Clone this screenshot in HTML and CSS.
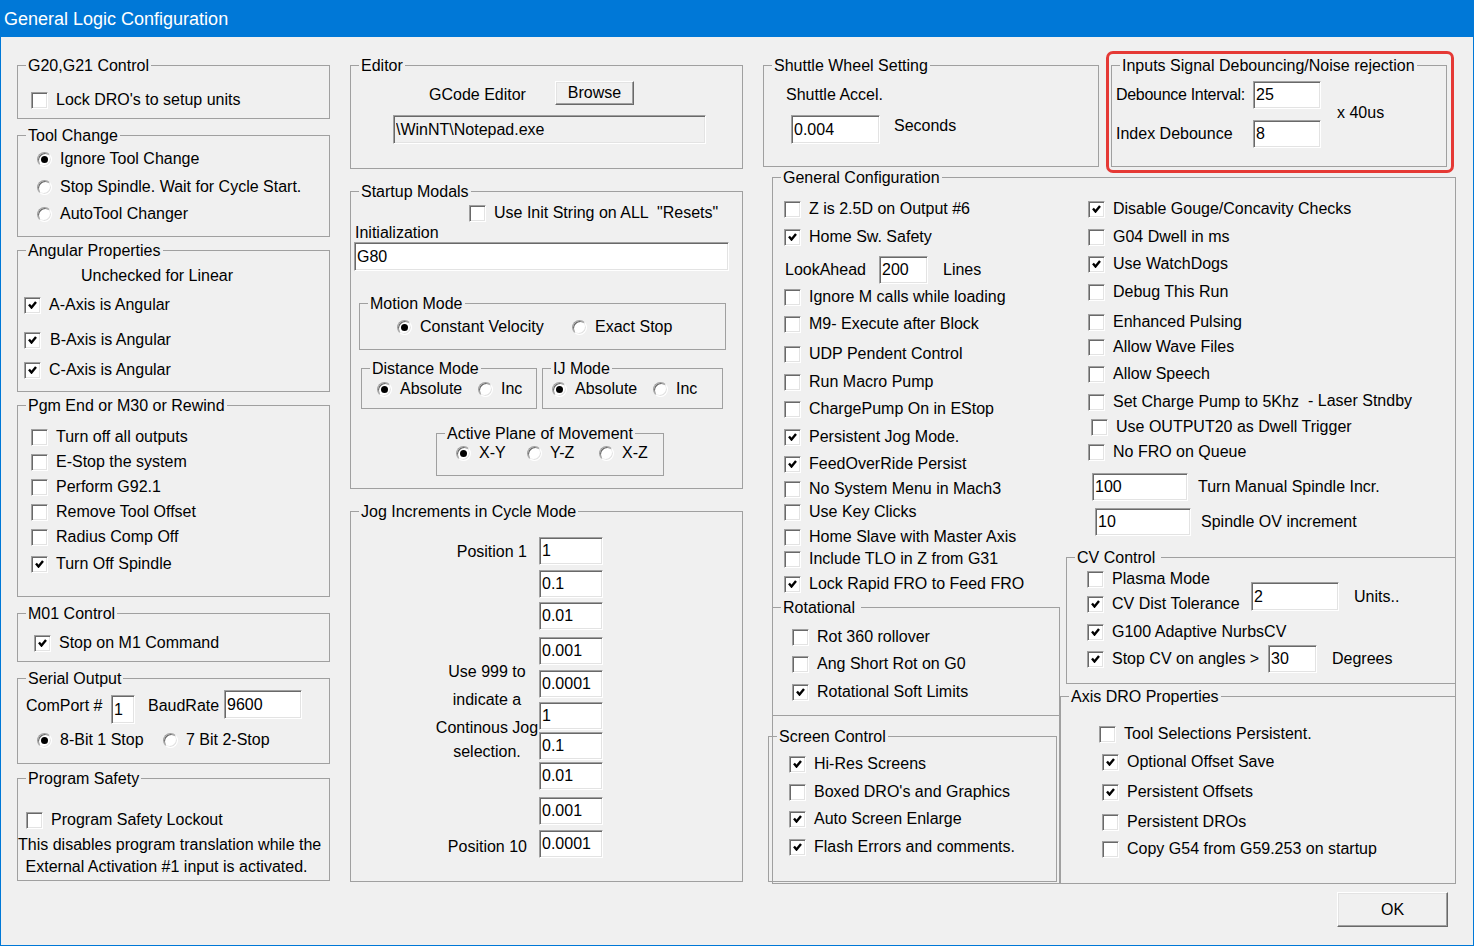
FILE: index.html
```html
<!DOCTYPE html>
<html lang="en">
<head>
<meta charset="utf-8">
<title>General Logic Configuration</title>
<link rel="stylesheet" href="styles.css">
</head>
<body>
<div class="window">
  <div class="titlebar">General Logic Configuration</div>
  <div class="content">

    <!-- Column 1 -->
    <div class="col col1">
      <div class="box b-g20">
        <span class="lg">G20,G21 Control</span>
        <div class="row"><span class="chk"></span>Lock DRO's to setup units</div>
      </div>

      <div class="box b-tool">
        <span class="lg">Tool Change</span>
        <div class="row"><span class="rad on"></span>Ignore Tool Change</div>
        <div class="row mt8"><span class="rad"></span>Stop Spindle. Wait for Cycle Start.</div>
        <div class="row mt7"><span class="rad"></span>AutoTool Changer</div>
      </div>

      <div class="box b-ang">
        <span class="lg">Angular Properties</span>
        <div class="row unchk">Unchecked for Linear</div>
        <div class="row mt9"><span class="chk on"><svg viewBox="0 0 9 8"><path d="M1 3.5 3.5 6.5 8 1"/></svg></span>A-Axis is Angular</div>
        <div class="row mt15"><span class="chk on"><svg viewBox="0 0 9 8"><path d="M1 3.5 3.5 6.5 8 1"/></svg></span><span class="ml1">B-Axis is Angular</span></div>
        <div class="row mt10"><span class="chk on"><svg viewBox="0 0 9 8"><path d="M1 3.5 3.5 6.5 8 1"/></svg></span>C-Axis is Angular</div>
      </div>

      <div class="box b-pgm">
        <span class="lg">Pgm End or M30 or Rewind</span>
        <div class="row"><span class="chk"></span>Turn off all outputs</div>
        <div class="row mt5"><span class="chk"></span>E-Stop the system</div>
        <div class="row mt5"><span class="chk"></span>Perform G92.1</div>
        <div class="row mt5"><span class="chk"></span>Remove Tool Offset</div>
        <div class="row mt5"><span class="chk"></span>Radius Comp Off</div>
        <div class="row mt7"><span class="chk on"><svg viewBox="0 0 9 8"><path d="M1 3.5 3.5 6.5 8 1"/></svg></span>Turn Off Spindle</div>
      </div>

      <div class="box b-m01">
        <span class="lg">M01 Control</span>
        <div class="row"><span class="chk on"><svg viewBox="0 0 9 8"><path d="M1 3.5 3.5 6.5 8 1"/></svg></span>Stop on M1 Command</div>
      </div>

      <div class="box b-serial">
        <span class="lg">Serial Output</span>
        <div class="ser1">
          <span class="l-com">ComPort #</span>
          <input class="tb com-in" value="1" readonly>
          <span class="l-baud">BaudRate</span>
          <input class="tb baud-in" value="9600" readonly>
        </div>
        <div class="row mt5">
          <span class="opt ser-o1"><span class="rad on"></span>8-Bit 1 Stop</span>
          <span class="opt"><span class="rad"></span>7 Bit 2-Stop</span>
        </div>
      </div>

      <div class="box b-safe">
        <span class="lg">Program Safety</span>
        <div class="row"><span class="chk"></span>Program Safety Lockout</div>
        <div class="note">This disables program translation while the<br>External Activation #1 input is activated.</div>
      </div>
    </div>

    <!-- Column 2 -->
    <div class="col col2">
      <div class="box b-edit">
        <span class="lg">Editor</span>
        <div class="ed1"><span class="l-gce">GCode Editor</span><button class="btn b-browse" type="button">Browse</button></div>
        <input class="tb dis ed-path" value="\WinNT\Notepad.exe" readonly>
      </div>

      <div class="box b-start">
        <span class="lg">Startup Modals</span>
        <div class="row st1"><span class="chk"></span>Use Init String on ALL &nbsp;"Resets"</div>
        <div class="st-init">Initialization</div>
        <input class="tb st-in" value="G80" readonly>

        <div class="box b-motion">
          <span class="lg">Motion Mode</span>
          <div class="row">
            <span class="opt w175"><span class="rad on"></span>Constant Velocity</span>
            <span class="opt"><span class="rad"></span>Exact Stop</span>
          </div>
        </div>

        <div class="dist-row">
          <div class="box b-dist">
            <span class="lg">Distance Mode</span>
            <div class="row">
              <span class="opt w101"><span class="rad on"></span>Absolute</span>
              <span class="opt"><span class="rad"></span>Inc</span>
            </div>
          </div>
          <div class="box b-ij">
            <span class="lg">IJ Mode</span>
            <div class="row">
              <span class="opt w101"><span class="rad on"></span>Absolute</span>
              <span class="opt"><span class="rad"></span>Inc</span>
            </div>
          </div>
        </div>

        <div class="box b-plane">
          <span class="lg">Active Plane of Movement</span>
          <div class="row">
            <span class="opt w71"><span class="rad on"></span>X-Y</span>
            <span class="opt w72"><span class="rad"></span>Y-Z</span>
            <span class="opt"><span class="rad"></span>X-Z</span>
          </div>
        </div>
      </div>

      <div class="box b-jog">
        <span class="lg">Jog Increments in Cycle Mode</span>
        <div class="jog-labels">
          <div class="jl-p1">Position 1</div>
          <div class="jl-note">
            <div class="jn">Use 999 to</div>
            <div class="jn">indicate a</div>
            <div class="jn">Continous Jog</div>
            <div class="jn last">selection.</div>
          </div>
          <div class="jl-p10">Position 10</div>
        </div>
        <div class="jog-inputs">
          <input class="tb jin" value="1" readonly>
          <input class="tb jin mt5" value="0.1" readonly>
          <input class="tb jin mt4" value="0.01" readonly>
          <input class="tb jin mt7" value="0.001" readonly>
          <input class="tb jin mt5" value="0.0001" readonly>
          <input class="tb jin mt4" value="1" readonly>
          <input class="tb jin mt2" value="0.1" readonly>
          <input class="tb jin mt2" value="0.01" readonly>
          <input class="tb jin mt7" value="0.001" readonly>
          <input class="tb jin mt5" value="0.0001" readonly>
        </div>
      </div>
    </div>

    <!-- Column 3 -->
    <div class="col col3">
      <div class="toprow">
        <div class="box b-shuttle">
          <span class="lg">Shuttle Wheel Setting</span>
          <div class="row">Shuttle Accel.</div>
          <div class="sh2"><input class="tb sh-in" value="0.004" readonly><span class="sh-sec">Seconds</span></div>
        </div>
        <div class="box b-deb">
          <span class="lg">Inputs Signal Debouncing/Noise rejection</span>
          <div class="deb-rows">
            <div class="deb-row"><span class="deb-l tight">Debounce Interval:</span><input class="tb deb-in" value="25" readonly></div>
            <div class="deb-row mt11"><span class="deb-l">Index Debounce</span><input class="tb deb-in" value="8" readonly></div>
          </div>
          <span class="deb-x">x 40us</span>
          <div class="mark"></div>
        </div>
      </div>

      <div class="box b-gen">
        <span class="lg">General Configuration</span>

        <div class="gl">
          <div class="glist">
            <div class="row"><span class="chk"></span>Z is 2.5D on Output #6</div>
            <div class="row mt8"><span class="chk on"><svg viewBox="0 0 9 8"><path d="M1 3.5 3.5 6.5 8 1"/></svg></span>Home Sw. Safety</div>
            <div class="row look mt9"><span class="look-l">LookAhead</span><input class="tb look-in" value="200" readonly><span class="look-u">Lines</span></div>
            <div class="row mt3"><span class="chk"></span>Ignore M calls while loading</div>
            <div class="row mt7"><span class="chk"></span>M9- Execute after Block</div>
            <div class="row mt10"><span class="chk"></span>UDP Pendent Control</div>
            <div class="row mt8"><span class="chk"></span>Run Macro Pump</div>
            <div class="row mt7"><span class="chk"></span>ChargePump On in EStop</div>
            <div class="row mt8"><span class="chk on"><svg viewBox="0 0 9 8"><path d="M1 3.5 3.5 6.5 8 1"/></svg></span>Persistent Jog Mode.</div>
            <div class="row mt7"><span class="chk on"><svg viewBox="0 0 9 8"><path d="M1 3.5 3.5 6.5 8 1"/></svg></span>FeedOverRide Persist</div>
            <div class="row mt5"><span class="chk"></span>No System Menu in Mach3</div>
            <div class="row mt3"><span class="chk"></span>Use Key Clicks</div>
            <div class="row mt5"><span class="chk"></span>Home Slave with Master Axis</div>
            <div class="row mt2"><span class="chk"></span>Include TLO in Z from G31</div>
            <div class="row mt5"><span class="chk on"><svg viewBox="0 0 9 8"><path d="M1 3.5 3.5 6.5 8 1"/></svg></span>Lock Rapid FRO to Feed FRO</div>
          </div>

          <div class="box b-rot">
            <span class="lg lg-wide">Rotational</span>
            <div class="row"><span class="chk"></span>Rot 360 rollover</div>
            <div class="row mt7"><span class="chk"></span>Ang Short Rot on G0</div>
            <div class="row mt8"><span class="chk on"><svg viewBox="0 0 9 8"><path d="M1 3.5 3.5 6.5 8 1"/></svg></span>Rotational Soft Limits</div>
          </div>

          <div class="glow">
            <div class="box b-scr">
              <span class="lg">Screen Control</span>
              <div class="row"><span class="chk on"><svg viewBox="0 0 9 8"><path d="M1 3.5 3.5 6.5 8 1"/></svg></span>Hi-Res Screens</div>
              <div class="row mt8"><span class="chk"></span>Boxed DRO's and Graphics</div>
              <div class="row mt7"><span class="chk on"><svg viewBox="0 0 9 8"><path d="M1 3.5 3.5 6.5 8 1"/></svg></span>Auto Screen Enlarge</div>
              <div class="row mt8"><span class="chk on"><svg viewBox="0 0 9 8"><path d="M1 3.5 3.5 6.5 8 1"/></svg></span>Flash Errors and comments.</div>
            </div>
          </div>
        </div>

        <div class="gr">
          <div class="rlist">
            <div class="row"><span class="chk on"><svg viewBox="0 0 9 8"><path d="M1 3.5 3.5 6.5 8 1"/></svg></span>Disable Gouge/Concavity Checks</div>
            <div class="row mt8"><span class="chk"></span>G04 Dwell in ms</div>
            <div class="row mt7"><span class="chk on"><svg viewBox="0 0 9 8"><path d="M1 3.5 3.5 6.5 8 1"/></svg></span>Use WatchDogs</div>
            <div class="row mt8"><span class="chk"></span>Debug This Run</div>
            <div class="row mt10"><span class="chk"></span>Enhanced Pulsing</div>
            <div class="row mt5"><span class="chk"></span>Allow Wave Files</div>
            <div class="row mt7"><span class="chk"></span>Allow Speech</div>
            <div class="row mt8"><span class="chk"></span><span class="lsc-l">Set Charge Pump to 5Khz</span><span class="laser">- Laser Stndby</span></div>
            <div class="row mt5"><span class="chk ml3"></span>Use OUTPUT20 as Dwell Trigger</div>
            <div class="row mt5"><span class="chk"></span>No FRO on Queue</div>
            <div class="spin spin1"><input class="tb sp-in" value="100" readonly><span class="sp-l">Turn Manual Spindle Incr.</span></div>
            <div class="spin spin2"><input class="tb sp-in" value="10" readonly><span class="sp-l">Spindle OV increment</span></div>
          </div>

          <div class="box b-cv">
            <span class="lg lg-wide">CV Control</span>
            <div class="row"><span class="chk"></span>Plasma Mode</div>
            <div class="row mt5"><span class="chk on"><svg viewBox="0 0 9 8"><path d="M1 3.5 3.5 6.5 8 1"/></svg></span><span class="cv-l1">CV Dist Tolerance</span><input class="tb cv-in1" value="2" readonly><span class="cv-u">Units..</span></div>
            <div class="row mt8"><span class="chk on"><svg viewBox="0 0 9 8"><path d="M1 3.5 3.5 6.5 8 1"/></svg></span>G100 Adaptive NurbsCV</div>
            <div class="row mt7"><span class="chk on"><svg viewBox="0 0 9 8"><path d="M1 3.5 3.5 6.5 8 1"/></svg></span><span class="cv-l2">Stop CV on angles &gt;</span><input class="tb cv-in2" value="30" readonly><span class="cv-d">Degrees</span></div>
          </div>

          <div class="box b-axis">
            <span class="lg">Axis DRO Properties</span>
            <div class="row"><span class="chk"></span>Tool Selections Persistent.</div>
            <div class="row mt8"><span class="chk on ml3"><svg viewBox="0 0 9 8"><path d="M1 3.5 3.5 6.5 8 1"/></svg></span>Optional Offset Save</div>
            <div class="row mt10"><span class="chk on ml3"><svg viewBox="0 0 9 8"><path d="M1 3.5 3.5 6.5 8 1"/></svg></span>Persistent Offsets</div>
            <div class="row mt10"><span class="chk ml3"></span>Persistent DROs</div>
            <div class="row mt7"><span class="chk ml3"></span>Copy G54 from G59.253 on startup</div>
          </div>
        </div>
      </div>

      <button class="btn okbtn" type="button">OK</button>
    </div>

  </div>
</div>
</body>
</html>
```

FILE: styles.css
```css
html, body {
  margin: 0;
  padding: 0;
}

body {
  font-family: "Liberation Sans", Arial, sans-serif;
  font-size: 16px;
  color: #000;
  background: #f0f0f0;
  white-space: nowrap;
}

.window {
  width: 1474px;
  height: 946px;
  box-sizing: border-box;
  border: 1px solid #0078d7;
  border-top: 0;
  background: #f0f0f0;
  overflow: hidden;
}

.titlebar {
  height: 37px;
  margin: 0 -1px;
  padding-left: 4px;
  background: #0078d7;
  color: #fff;
  font-size: 18px;
  line-height: 38px;
}

.content {
  display: flex;
  align-items: flex-start;
  padding-left: 16px;
}

.col {
  display: flex;
  flex-direction: column;
  flex: none;
}

.col1 { width: 313px; }
.col2 { width: 393px; margin-left: 20px; }
.col3 { width: 693px; margin-left: 20px; }

/* group boxes */
.box {
  position: relative;
  box-sizing: border-box;
  border: 1px solid #a0a0a0;
  flex: none;
}

.lg {
  position: absolute;
  left: 8px;
  top: -10px;
  padding: 0 2px;
  line-height: 20px;
  background: #f0f0f0;
}

.lg-wide { padding-right: 6px; }

/* rows / controls */
.row {
  display: flex;
  align-items: center;
  height: 20px;
}

.opt {
  display: flex;
  align-items: center;
  flex: none;
}

.chk {
  flex: none;
  box-sizing: border-box;
  width: 17px;
  height: 17px;
  margin-right: 8px;
  background: #fff;
  border: 1px solid;
  border-color: #a0a0a0 #fff #fff #a0a0a0;
  box-shadow: inset 1px 1px 0 #696969, inset -1px -1px 0 #e3e3e3;
  display: flex;
  align-items: center;
  justify-content: center;
}

.chk svg {
  width: 9px;
  height: 8px;
  fill: none;
  stroke: #000;
  stroke-width: 2.4;
}

.rad {
  flex: none;
  box-sizing: border-box;
  width: 15px;
  height: 15px;
  margin-right: 8px;
  border-radius: 50%;
  background: #fff;
  border: 1px solid;
  border-color: #a0a0a0 #fff #fff #a0a0a0;
  box-shadow: inset 1px 1px 0 #696969, inset -1px -1px 0 #e3e3e3;
  display: flex;
  align-items: center;
  justify-content: center;
}

.rad.on::after {
  content: "";
  width: 7px;
  height: 7px;
  border-radius: 50%;
  background: #000;
}

.tb {
  box-sizing: border-box;
  display: block;
  flex: none;
  margin: 0;
  padding: 0 0 0 2px;
  font: 16px "Liberation Sans", Arial, sans-serif;
  color: #000;
  background: #fff;
  border: 1px solid;
  border-color: #a0a0a0 #fff #fff #a0a0a0;
  box-shadow: inset 1px 1px 0 #696969, inset -1px -1px 0 #e3e3e3;
  outline: none;
}

.tb.dis { background: #f0f0f0; }

.btn {
  box-sizing: border-box;
  display: block;
  flex: none;
  margin: 0;
  padding: 0;
  font: 16px "Liberation Sans", Arial, sans-serif;
  color: #000;
  background: #f0f0f0;
  border: 1px solid;
  border-color: #fff #696969 #696969 #fff;
  box-shadow: inset -1px -1px 0 #a0a0a0, inset 1px 1px 0 #e3e3e3;
}

/* spacing helpers */
.mt2 { margin-top: 2px; }
.mt3 { margin-top: 3px; }
.mt4 { margin-top: 4px; }
.mt5 { margin-top: 5px; }
.mt7 { margin-top: 7px; }
.mt8 { margin-top: 8px; }
.mt9 { margin-top: 9px; }
.mt10 { margin-top: 10px; }
.mt11 { margin-top: 11px; }
.mt15 { margin-top: 15px; }
.ml1 { margin-left: 1px; }
.ml3 { margin-left: 3px; }
.w71 { width: 71px; }
.w72 { width: 72px; }
.w101 { width: 101px; }
.w175 { width: 175px; }

/* column 1 */
.b-g20 { height: 54px; margin-top: 28px; padding: 24px 0 0 13px; }
.b-tool { height: 102px; margin-top: 16px; padding: 13px 0 0 19px; }
.b-ang { height: 142px; margin-top: 13px; padding: 15px 0 0 6px; }
.unchk { padding-left: 57px; }
.b-pgm { height: 192px; margin-top: 13px; padding: 21px 0 0 13px; }
.b-m01 { height: 49px; margin-top: 16px; padding: 19px 0 0 16px; }
.b-serial { height: 86px; margin-top: 16px; padding: 11px 0 0 8px; }

.ser1 {
  display: flex;
  align-items: flex-start;
  height: 35px;
}

.l-com { flex: none; width: 85px; margin-top: 6px; line-height: 20px; }
.com-in { width: 24px; height: 29px; margin-top: 5px; }
.l-baud { flex: none; width: 76px; margin: 6px 0 0 13px; line-height: 20px; }
.baud-in { width: 78px; height: 29px; }
.ser-o1 { width: 126px; margin-left: 11px; }

.b-safe { height: 103px; margin-top: 14px; padding: 31px 0 0 8px; }

.note {
  margin: 4px 0 0 -8px;
  padding-right: 14px;
  line-height: 22px;
  text-align: center;
}

/* column 2 */
.b-edit { height: 104px; margin-top: 28px; padding-top: 15px; }

.ed1 {
  display: flex;
  align-items: center;
  height: 24px;
  padding-left: 78px;
}

.l-gce { flex: none; width: 126px; padding-top: 3px; }
.b-browse { width: 79px; height: 24px; }
.ed-path { width: 313px; height: 29px; margin: 10px 0 0 42px; }

.b-start { height: 298px; margin-top: 22px; padding-top: 11px; }
.st1 { padding-left: 118px; }
.st-init { height: 18px; margin: 1px 0 0 4px; line-height: 18px; }
.st-in { width: 375px; height: 29px; margin-left: 3px; }

.b-motion { width: 367px; height: 47px; margin: 32px 0 0 8px; padding: 13px 0 0 37px; }

.dist-row { display: flex; margin: 18px 0 0 10px; }
.b-dist { width: 176px; height: 41px; padding: 10px 0 0 15px; }
.b-ij { width: 181px; height: 41px; margin-left: 5px; padding: 10px 0 0 9px; }
.b-plane { width: 228px; height: 43px; margin: 24px 0 0 85px; padding: 9px 0 0 19px; }

.b-jog { height: 371px; margin-top: 22px; display: flex; }

.jog-labels {
  flex: none;
  width: 188px;
  display: flex;
  flex-direction: column;
}

.jl-p1 { margin-top: 30px; padding-right: 12px; line-height: 20px; text-align: right; }
.jl-note { margin-top: 96px; padding-left: 84px; text-align: center; }
.jn { height: 28px; line-height: 28px; }
.jn.last { height: 20px; line-height: 20px; }
.jl-p10 { margin-top: 75px; padding-right: 12px; line-height: 20px; text-align: right; }

.jog-inputs { display: flex; flex-direction: column; padding-top: 25px; }
.jin { width: 64px; height: 28px; }

/* column 3 */
.toprow { display: flex; margin-top: 28px; }

.b-shuttle { width: 336px; height: 102px; padding: 19px 0 0 22px; }
.sh2 { display: flex; align-items: flex-start; margin-top: 10px; }
.sh-in { width: 89px; height: 29px; margin-left: 5px; }
.sh-sec { margin: 1px 0 0 14px; line-height: 20px; }

.b-deb {
  width: 336px;
  height: 102px;
  margin-left: 12px;
  padding: 15px 0 0 4px;
  display: flex;
  align-items: flex-start;
}

.deb-row { display: flex; align-items: center; }
.deb-l { flex: none; width: 137px; line-height: 20px; }
.tight { letter-spacing: -0.3px; }
.deb-in { width: 68px; height: 28px; }
.deb-x { margin: 22px 0 0 16px; line-height: 20px; }

.mark {
  position: absolute;
  left: -6px;
  top: -15px;
  right: -8px;
  bottom: -7px;
  border: 3px solid #e53935;
  border-radius: 7px;
  pointer-events: none;
}

.b-gen {
  width: 684px;
  height: 707px;
  margin: 10px 0 0 9px;
  display: grid;
  grid-template-columns: 287px 395px;
  align-items: start;
}

.gl, .gr { display: flex; flex-direction: column; }

.glist { padding: 21px 0 0 11px; }
.row.look { height: 28px; }
.look-l { flex: none; width: 94px; margin-left: 1px; }
.look-in { width: 49px; height: 28px; }
.look-u { margin-left: 15px; }

.b-rot { width: 288px; height: 109px; margin: 13px 0 0 -1px; padding: 19px 0 0 19px; }

.glow {
  box-sizing: border-box;
  height: 167px;
  border-right: 1px solid #a0a0a0;
}

.b-scr { width: 289px; height: 146px; margin: 20px 0 0 -5px; padding: 17px 0 0 20px; }

.rlist { padding: 21px 0 0 28px; }
.lsc-l { flex: none; width: 195px; }
.laser { margin-top: -3px; }

.spin { display: flex; align-items: center; height: 28px; }
.spin1 { margin: 11px 0 0 4px; }
.spin2 { margin: 7px 0 0 7px; }
.sp-in { width: 96px; height: 28px; }
.sp-l { margin-left: 10px; }

.b-cv { width: 390px; height: 127px; margin: 21px 0 0 6px; padding: 11px 0 0 20px; }
.cv-l1 { flex: none; width: 139px; }
.cv-in1 { width: 88px; height: 29px; align-self: flex-start; margin-top: -12px; }
.cv-u { align-self: flex-start; margin: -7px 0 0 15px; line-height: 20px; }
.cv-l2 { flex: none; width: 156px; }
.cv-in2 { width: 49px; height: 28px; }
.cv-d { margin-left: 15px; }

.b-axis { width: 396px; height: 188px; margin-top: 12px; padding: 27px 0 0 38px; }

.okbtn {
  width: 111px;
  height: 35px;
  margin: 8px 8px 0 0;
  align-self: flex-end;
}
```
